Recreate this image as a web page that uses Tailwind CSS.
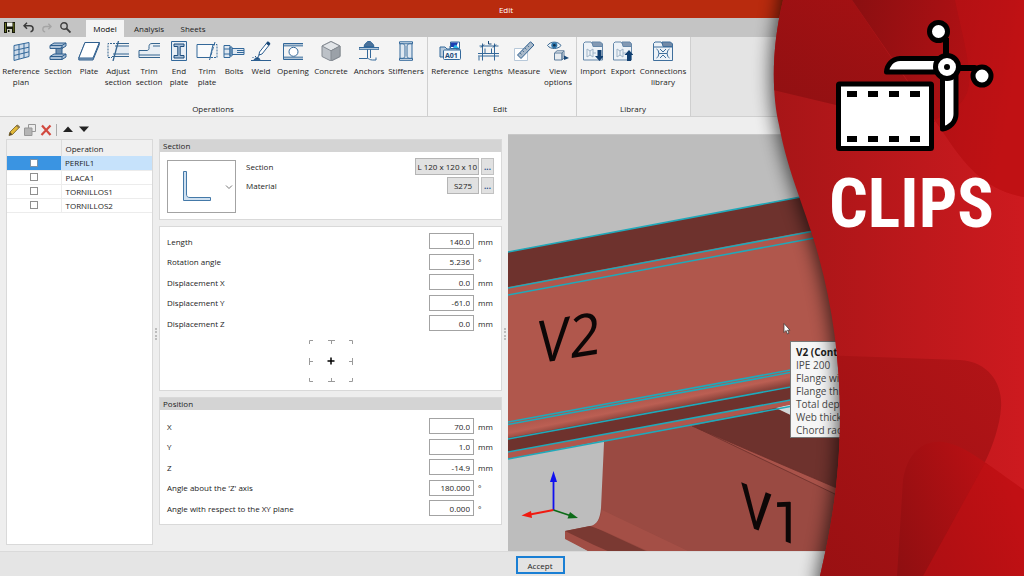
<!DOCTYPE html>
<html lang="en">
  <head>
    <meta charset="UTF-8" />
    <meta name="viewport" content="width=device-width, initial-scale=1.0" />
    <title>Edit</title>
    <script src="https://cdn.jsdelivr.net/npm/@tailwindcss/browser@4"></script>
  </head>
  <body>
    <div
      class="relative flex min-h-screen flex-col overflow-hidden bg-[#eeeeee] font-['Open_Sans','Noto_Sans',sans-serif] text-[8px] leading-[11px] text-[#1c1c1c]"
    >
      <!-- Title bar -->
      <header class="flex h-[18px] items-center justify-center bg-[#b92b0e] pr-3">
        <h1 class="text-white">Edit</h1>
      </header>

      <!-- Quick access + tabs -->
      <nav class="flex h-[19px] items-end bg-[#c4c4c4]">
        <div class="flex h-full w-[86px] items-center gap-2 pl-1">
          <button aria-label="Save">
            <svg class="size-[11px]" viewBox="0 0 11 11">
              <path d="M0 0h11v11H0z" fill="#15170c" />
              <path d="M3 0.500h5.500v4H3z" fill="#eef0e8" />
              <path d="M3 7h5v4H3z" fill="#c9cabb" />
              <path d="M1 1h1v9H1zM9.300 1h1v9h-1z" fill="#6c7420" />
              <path d="M4 8h1.500v2H4z" fill="#15170c" />
            </svg>
          </button>
          <button aria-label="Undo">
            <svg class="size-[11px]" viewBox="0 0 11 11" fill="none" stroke="#3b3b3b" stroke-width="1.500">
              <path d="M4 0.800 1 3.800l3 3M1.200 3.800H7c4 0 4 5.500 0.500 6" />
            </svg>
          </button>
          <button aria-label="Redo" disabled>
            <svg class="size-[10px]" viewBox="0 0 11 11" fill="none" stroke="#a5a5a5" stroke-width="1.500">
              <path d="M7 0.800l3 3-3 3M9.800 3.800H4c-4 0-4 5.500-0.500 6" />
            </svg>
          </button>
          <button aria-label="Search">
            <svg class="size-[11px]" viewBox="0 0 11 11" fill="none" stroke="#3f3f3f" stroke-width="1.400">
              <circle cx="4" cy="4" r="3.200" />
              <path d="M6.400 6.400 10.500 10.500" stroke-width="1.900" />
            </svg>
          </button>
        </div>
        <button class="h-[17px] w-[38px] bg-[#f4f4f4] text-black">Model</button>
        <button class="h-[17px] w-[50px]">Analysis</button>
        <button class="h-[17px] w-[38px]">Sheets</button>
      </nav>

      <!-- Ribbon -->
      <div class="flex h-20 border-b border-[#d0d0d0] bg-[#e4e4e4]">
        <section class="flex flex-col justify-between border-r border-[#cfcfcf] bg-[#f4f4f4] pt-1 pr-0.5 pl-px">
          <div class="flex items-start">
            <button class="flex w-10 flex-col items-center gap-1">
              <svg class="size-5" viewBox="0 0 20 20" fill="#cfdcea" stroke="#33689a">
                <path d="M3 4.500 18 1.500V15.500L3 19.500z" />
                <path d="M8 3.500V18M13 2.500V17M3 9.500 18 6.200M3 14.500 18 10.800" fill="none" />
              </svg>
              <span>Reference<br />plan</span>
            </button>
            <button class="flex w-[34px] flex-col items-center gap-1">
              <svg class="size-5" viewBox="0 0 20 20" fill="#a9bfd6" stroke="#2f5f8e">
                <path d="M2 4.500 6 2h12v3l-4 2.500H2z" />
                <path d="M8 7.500h4l2-1v7l-2 1H8z" fill="#6f8fb0" />
                <path d="M2 15.500 6 13h12v3l-4 2.500H2z" />
                <path d="M2 4.500h12M14 7.500v-3l4-2.500M2 15.500h12v3M14 15.500l4-2.500" fill="none" />
              </svg>
              <span>Section</span>
            </button>
            <button class="flex w-7 flex-col items-center gap-1">
              <svg class="h-5 w-[22px]" viewBox="0 0 22 20" stroke="#2f5f8e">
                <path d="M7 1.500h14.300v2L15 19H0.800v-2z" fill="#8fa9c4" />
                <path d="M7 1.500h14.300L15 17H0.800z" fill="#fff" />
              </svg>
              <span>Plate</span>
            </button>
            <button class="flex w-[30px] flex-col items-center gap-1">
              <svg class="h-5 w-[22px]" viewBox="0 0 22 20" fill="none" stroke="#35658f">
                <path d="M8 4.500h14v10H8z" fill="#e4ebf2" stroke="none" />
                <path d="M9 2.500h13M8 5h14M6 13h16M5 15.500h17" />
                <path d="M8 2.500H1v14h4" stroke-dasharray="2 1" />
                <path d="M11.500 0 6 20" stroke-width="1.300" />
              </svg>
              <span>Adjust<br />section</span>
            </button>
            <button class="flex w-8 flex-col items-center gap-1">
              <svg class="h-5 w-[22px]" viewBox="0 0 22 20" fill="none" stroke="#35658f">
                <path d="M1 9.500h8c1.500 0 2-1 2-2V5c0-1.500 1-2 2-2h9V16.500H1z" fill="#e8eef4" stroke="none" />
                <path d="M22 2.500h-8c-2 0-3 1-3 3v2c0 1-1 2-2 2H1v7h21M1 14h21M22 5h-7" />
              </svg>
              <span>Trim<br />section</span>
            </button>
            <button class="flex w-7 flex-col items-center gap-1">
              <svg class="size-5" viewBox="0 0 20 20" fill="#e7eef5" stroke="#33689a">
                <path d="M2.500 0.500h15v19h-15z" />
                <path d="M5 3h10v2.500h-3.800v9H15V17H5v-2.500h3.800v-9H5z" fill="#a5bdd6" stroke="#1d4d7d" />
              </svg>
              <span>End<br />plate</span>
            </button>
            <button class="flex w-7 flex-col items-center gap-1">
              <svg class="h-5 w-[22px]" viewBox="0 0 22 20" fill="none" stroke="#33689a">
                <path d="M1 3.500h16l-3 13H1z" fill="#f8fafc" />
                <path d="M17 3.500h4v13h-7" stroke-dasharray="2 1" />
                <path d="M19 1 13.500 19" stroke-dasharray="4 1" />
              </svg>
              <span>Trim<br />plate</span>
            </button>
            <button class="flex w-[26px] flex-col items-center gap-1">
              <svg class="h-5 w-[22px]" viewBox="0 0 22 20" fill="#dfe8f1" stroke="#33689a">
                <path d="M1 4.500h6v12H1zM7 6h2v9H7zM9 7.500h12v6H9z" />
                <path d="M1 8h6M1 13h6M14 9.500h7M14 11.500h7" />
              </svg>
              <span>Bolts</span>
            </button>
            <button class="flex w-7 flex-col items-center gap-1">
              <svg class="size-5" viewBox="0 0 20 20" fill="none" stroke="#2d5f90">
                <path d="M16.500 1 19 3 11 13l-3 1 0.500-3z" fill="#fff" />
                <path d="M16 1.500 18.500 3.500" stroke="#174676" stroke-width="3" />
                <path d="M8.500 13 6.500 17" />
                <path d="M0 19.500h20" />
                <path d="M3 19c1-3 5-3 6-0.500z" fill="#174676" />
                <path d="M4.500 15v1M1.500 16.500h1" />
              </svg>
              <span>Weld</span>
            </button>
            <button class="flex w-9 flex-col items-center gap-1">
              <svg class="h-5 w-[22px]" viewBox="0 0 22 20" fill="none" stroke="#33689a">
                <path d="M1.500 2.500H21M1.500 18.500H21M1.500 2.500v16" />
                <path d="M2 4.500h19M2 16.500h19" stroke="#6f94b6" stroke-width="2" />
                <circle cx="11.500" cy="10.800" r="4.500" fill="#fff" />
              </svg>
              <span>Opening</span>
            </button>
            <button class="flex w-10 flex-col items-center gap-1">
              <svg class="size-5" viewBox="0 0 20 20" stroke="#858b92">
                <path d="M10 0.500 19 5v10.500L10 20l-9-4.500V5z" fill="#bcc1c7" />
                <path d="M10 0.500 19 5l-9 4.800L1 5z" fill="#e2e5e8" />
                <path d="M10 9.800 19 5v10.500L10 20z" fill="#9ba1a8" />
              </svg>
              <span>Concrete</span>
            </button>
            <button class="flex w-9 flex-col items-center gap-1">
              <svg class="size-5" viewBox="0 0 20 20" fill="none" stroke="#33689a">
                <path d="M5 5.500C5.500 2 8 2 8.500 0.500h3C12 2 14.500 2 15 5.500z" fill="#4a7199" />
                <path d="M0 6.500h20v1.800H0z" fill="#d4e0eb" />
                <path d="M8.500 8.300v8.700M11.500 8.300v8.700M0 17.500h8.500c1.500 0 2 1.500 5 1.500h3.500v-2.500" />
              </svg>
              <span>Anchors</span>
            </button>
            <button class="flex w-[38px] flex-col items-center gap-1">
              <svg class="size-5" viewBox="0 0 20 20" fill="#dfe8f1" stroke="#33689a">
                <path d="M3.500 0.800h13v2h-13zM3.500 17.300h13v2h-13z" />
                <path d="M4 2.800h3.500l1.500 2v10.500l-1.500 2H4zM16 2.800h-3.500l-1.500 2v10.500l1.500 2H16z" />
              </svg>
              <span>Stiffeners</span>
            </button>
          </div>
          <h2 class="pb-0.5 text-center">Operations</h2>
        </section>

        <section class="flex flex-col justify-between border-r border-[#cfcfcf] bg-[#f4f4f4] pt-1 pr-1">
          <div class="flex items-start">
            <button class="flex w-11 flex-col items-center gap-1">
              <svg class="h-5 w-[22px]" viewBox="0 0 22 20" stroke="#33689a">
                <path d="M1 6h5l2 2h3V5h6v3h4v8H1z" fill="#b9cbdc" />
                <path d="M11.500 1h9v6.500h-9z" fill="#fff" />
                <path d="M12 1.500h7l-2 4.500h-5z" fill="#1d3fb0" stroke="none" />
                <path d="M16 3.500 20 7h-6z" fill="#27b7e6" stroke="none" />
                <rect x="4.500" y="9" width="17" height="9.500" rx="1" fill="#f4f8fb" />
                <text x="6" y="16.500" font-size="7" font-weight="700" fill="#1d4a7a" stroke="none">A01</text>
              </svg>
              <span>Reference</span>
            </button>
            <button class="flex w-8 flex-col items-center gap-1">
              <svg class="h-5 w-[22px]" viewBox="0 0 22 20" fill="none" stroke="#33689a">
                <path d="M2.500 5h19M5.500 2.500v17M17.500 2.500v17M1 12.500h21M1 15h21M8 7.500v5M14.500 7.500v5M2 19.500v-4" />
                <path d="M11.500 0v3h3M4 6.500 7 3.500M16 6.500l3-3" stroke="#174676" />
              </svg>
              <span>Lengths</span>
            </button>
            <button class="flex w-10 flex-col items-center gap-1">
              <svg class="size-5" viewBox="0 0 20 20" fill="none">
                <path d="M0.500 7.500h13v12h-13z" stroke="#b7c8d9" fill="#fff" />
                <path d="M16.500 0.800 20 4 7 17.500 3.500 14z" fill="#a9b9c9" stroke="#2f5f8e" />
                <path d="M6 12l1.500 1.500M8.500 9.500l1.500 1.500M11 7l1.500 1.500M13.500 4.500l1.500 1.500" stroke="#4d7396" />
              </svg>
              <span>Measure</span>
            </button>
            <button class="flex w-7 flex-col items-center gap-1">
              <svg class="h-5 w-[22px]" viewBox="0 0 22 20">
                <path d="M0.500 4.500C3.500 0 11 0 14 4.500 11 8.500 3.500 8.500 0.500 4.500z" fill="#eaf2f8" stroke="#37658f" />
                <circle cx="7.300" cy="4.300" r="3" fill="#2f77ac" />
                <circle cx="7.300" cy="4.300" r="1.300" fill="#10304f" />
                <path d="M7.500 12 10 9.800h7l-2 2.200v7H7.500zM15 19l2-2.200v-7" fill="#e8ecf0" stroke="#5d7d9c" />
                <path d="M7.500 12H15v7" fill="none" stroke="#5d7d9c" />
                <path d="M17 14.500 22 17l-5 2z" fill="#174676" />
              </svg>
              <span>View<br />options</span>
            </button>
          </div>
          <h2 class="pb-0.5 text-center">Edit</h2>
        </section>

        <section class="flex flex-col justify-between border-r border-[#cfcfcf] bg-[#f4f4f4] pt-1 pr-px">
          <div class="flex items-start">
            <button class="flex w-8 flex-col items-center gap-1">
              <svg class="size-5" viewBox="0 0 20 20" fill="none" stroke="#6487a9">
                <path d="M0.500 2.500 2 1h6l1.500 2h10v16h-19z" fill="#edf2f7" />
                <path d="M9 1h8.500L19.500 3v2.500H10z" fill="#8399b3" />
                <path d="M4 8l3 2 3-2M4 16l3-2 3 2M7 10v4M4 8v8M10 8v8M10 12h3" stroke="#9fb4c8" />
                <path d="M14.500 9h4v6H21l-4.500 5-4.500-5h2.500z" fill="#123f70" stroke="none" />
              </svg>
              <span>Import</span>
            </button>
            <button class="flex w-7 flex-col items-center gap-1">
              <svg class="size-5" viewBox="0 0 20 20" fill="none" stroke="#6487a9">
                <path d="M0.500 2.500 2 1h6l1.500 2h9v16h-18z" fill="#edf2f7" />
                <path d="M9 1h8L18.500 3v2.500H10z" fill="#8399b3" />
                <path d="M4 8l3 2 3-2M4 16l3-2 3 2M7 10v4M4 8v8M10 8v8M10 12h3" stroke="#9fb4c8" />
                <path d="M14 20h4v-6h2.500L16 9l-4.500 5H14z" fill="#123f70" stroke="none" />
              </svg>
              <span>Export</span>
            </button>
            <button class="flex w-[52px] flex-col items-center gap-1">
              <svg class="size-5" viewBox="0 0 20 20" fill="none" stroke="#3f6f9c">
                <path d="M0.500 2.500 2 1h6l1.500 2h10v16.500h-19z" fill="#edf2f7" />
                <path d="M9 1h8.500L19.500 3v2.500H10z" fill="#7189a6" />
                <path d="M1 6h18" />
                <path d="M3.500 8c3 1 3 8 0 9M16.500 8c-3 1-3 8 0 9M6 12.500h8M7 8l3 3 3-3M7 17l3-3 3 3" />
              </svg>
              <span>Connections<br />library</span>
            </button>
          </div>
          <h2 class="pb-0.5 text-center">Library</h2>
        </section>
      </div>

      <!-- Workspace -->
      <main class="flex grow">
        <!-- Operations list -->
        <div class="flex w-[153px] shrink-0 flex-col pb-1.5 pl-1.5">
          <div class="flex h-[22px] items-center gap-1 pt-1 pl-0.5">
            <button aria-label="Edit operation">
              <svg class="size-3" viewBox="0 0 12 12">
                <path d="M1 11.500 2 8 9 1l2.500 2.200L4.500 10.500z" fill="#e3b93a" stroke="#6e5a22" stroke-width="0.800" />
                <path d="M1 11.500 2 8l2.500 2.500z" fill="#5a4a2c" />
                <path d="M8 2 9.500 0.500 12 2.800 10.500 4.300z" fill="#8c7a52" />
              </svg>
            </button>
            <button aria-label="Copy operation">
              <svg class="size-3" viewBox="0 0 12 12" stroke="#979797">
                <path d="M4.500 0.500h7v7h-7z" fill="#ececec" />
                <path d="M0.500 4h7.500v7.500H0.500z" fill="#b5b5b5" />
              </svg>
            </button>
            <button aria-label="Delete operation">
              <svg class="size-3" viewBox="0 0 12 12" stroke="#d2493f" stroke-width="2.200">
                <path d="M2 1.500 10.500 11M10.500 1.500 1.500 11" />
              </svg>
            </button>
            <span class="h-3 w-px bg-[#ababab]"></span>
            <button class="ml-0.5" aria-label="Move up">
              <svg class="h-3 w-2.5" viewBox="0 0 10 12"><path d="M0 8 5 2.500l5 5.500z" fill="#222" /></svg>
            </button>
            <button class="ml-0.5" aria-label="Move down">
              <svg class="h-3 w-2.5" viewBox="0 0 10 12"><path d="M0 2.500 5 8l5-5.500z" fill="#222" /></svg>
            </button>
          </div>
          <div class="grow border border-[#d9d9d9] bg-white">
            <table class="w-full table-fixed border-collapse">
              <thead>
                <tr class="h-4 bg-[#f0f0f0] text-left">
                  <th class="w-[54px] border-r border-[#dcdcdc] font-normal" aria-label="Selected"></th>
                  <th class="p-0 pl-1 font-normal">Operation</th>
                </tr>
              </thead>
              <tbody>
                <tr class="h-3.5 border-b border-[#ececec]">
                  <td class="bg-[#3a94e2] p-0">
                    <input id="op1" type="checkbox" class="mx-auto block size-2 appearance-none border border-[#7c93a8] bg-white" />
                  </td>
                  <td class="bg-[#c6e2fb] p-0 pl-1"><label for="op1">PERFIL1</label></td>
                </tr>
                <tr class="h-3.5 border-b border-[#ececec]">
                  <td class="border-r border-[#ececec] p-0">
                    <input id="op2" type="checkbox" class="mx-auto block size-2 appearance-none border border-[#909090] bg-white" />
                  </td>
                  <td class="p-0 pl-1"><label for="op2">PLACA1</label></td>
                </tr>
                <tr class="h-3.5 border-b border-[#ececec]">
                  <td class="border-r border-[#ececec] p-0">
                    <input id="op3" type="checkbox" class="mx-auto block size-2 appearance-none border border-[#909090] bg-white" />
                  </td>
                  <td class="p-0 pl-1"><label for="op3">TORNILLOS1</label></td>
                </tr>
                <tr class="h-3.5 border-b border-[#ececec]">
                  <td class="border-r border-[#ececec] p-0">
                    <input id="op4" type="checkbox" class="mx-auto block size-2 appearance-none border border-[#909090] bg-white" />
                  </td>
                  <td class="p-0 pl-1"><label for="op4">TORNILLOS2</label></td>
                </tr>
              </tbody>
            </table>
          </div>
        </div>

        <div class="flex w-1.5 shrink-0 items-center justify-center">
          <span class="h-3 border-l-2 border-dotted border-[#bdbdbd]"></span>
        </div>

        <!-- Properties -->
        <form class="flex w-[343px] shrink-0 flex-col gap-1.5 pt-[22px]">
          <section class="border border-[#d9d9d9] bg-white">
            <h2 class="h-3 bg-[#d4d4d4] pl-[3px]">Section</h2>
            <div class="flex items-start justify-between gap-2.5 px-[7px] pt-1.5 pb-1.5">
              <button type="button" aria-label="Section type" class="mt-0.5 flex h-[53px] w-[69px] items-center justify-end border border-[#a3a3a3] bg-white pr-0.5">
                <svg class="h-9 w-7" viewBox="0 0 28 36" fill="#cfe0f0" stroke="#4479a8">
                  <path d="M0.500 2.500h3V25c0 2.500 1 3.500 3.500 3.500h20.500v3H0.500z" />
                </svg>
                <svg class="ml-3.5 size-2" viewBox="0 0 8 8" fill="none" stroke="#777"><path d="M1 2.500 4 5.500l3-3" /></svg>
              </button>
              <div class="flex grow flex-col gap-0.5">
                <div class="flex h-[17px] items-center gap-0.5">
                  <span class="grow">Section</span>
                  <button type="button" class="h-[17px] border border-[#b5b5b5] bg-[#e1e1e1] px-px">L 120 x 120 x 10</button>
                  <button type="button" aria-label="Choose section" class="h-[17px] w-[13px] border border-[#c2c2c2] bg-[#e1e1e1] font-bold text-[#28508c]">...</button>
                </div>
                <div class="flex h-[17px] items-center gap-0.5">
                  <span class="grow">Material</span>
                  <button type="button" class="h-[17px] w-8 border border-[#b5b5b5] bg-[#e1e1e1]">S275</button>
                  <button type="button" aria-label="Choose material" class="h-[17px] w-[13px] border border-[#c2c2c2] bg-[#e1e1e1] font-bold text-[#28508c]">...</button>
                </div>
              </div>
            </div>
          </section>

          <section class="border border-[#d9d9d9] bg-white px-[7px] pt-1.5 pb-px">
            <div class="flex h-[98px] flex-col justify-between">
              <div class="flex h-4 items-center gap-1">
                <label for="length" class="grow">Length</label>
                <input id="length" type="text" value="140.0" class="h-4 w-[45px] border border-[#a3a3a3] bg-white pr-[3px] text-right" />
                <span class="w-4">mm</span>
              </div>
              <div class="flex h-4 items-center gap-1">
                <label for="rotation" class="grow">Rotation angle</label>
                <input id="rotation" type="text" value="5.236" class="h-4 w-[45px] border border-[#a3a3a3] bg-white pr-[3px] text-right" />
                <span class="w-4">°</span>
              </div>
              <div class="flex h-4 items-center gap-1">
                <label for="dx" class="grow">Displacement X</label>
                <input id="dx" type="text" value="0.0" class="h-4 w-[45px] border border-[#a3a3a3] bg-white pr-[3px] text-right" />
                <span class="w-4">mm</span>
              </div>
              <div class="flex h-4 items-center gap-1">
                <label for="dy" class="grow">Displacement Y</label>
                <input id="dy" type="text" value="-61.0" class="h-4 w-[45px] border border-[#a3a3a3] bg-white pr-[3px] text-right" />
                <span class="w-4">mm</span>
              </div>
              <div class="flex h-4 items-center gap-1">
                <label for="dz" class="grow">Displacement Z</label>
                <input id="dz" type="text" value="0.0" class="h-4 w-[45px] border border-[#a3a3a3] bg-white pr-[3px] text-right" />
                <span class="w-4">mm</span>
              </div>
            </div>
            <!-- Insertion point picker -->
            <div class="mx-auto mt-px grid w-[60px] grid-cols-3">
              <button type="button" aria-label="Top left" class="h-[19px]">
                <svg class="mx-auto size-2" viewBox="0 0 8 8" fill="none" stroke="#9a9a9a"><path d="M2.500 6V2.500H6" /></svg>
              </button>
              <button type="button" aria-label="Top" class="h-[19px]">
                <svg class="mx-auto size-2" viewBox="0 0 8 8" fill="none" stroke="#9a9a9a"><path d="M1 2.500h7M4.500 2.500V6" /></svg>
              </button>
              <button type="button" aria-label="Top right" class="h-[19px]">
                <svg class="mx-auto size-2" viewBox="0 0 8 8" fill="none" stroke="#9a9a9a"><path d="M2 2.500h3.500V6" /></svg>
              </button>
              <button type="button" aria-label="Left" class="h-[19px]">
                <svg class="mx-auto size-2" viewBox="0 0 8 8" fill="none" stroke="#9a9a9a"><path d="M2.500 1v7M2.500 4.500H6" /></svg>
              </button>
              <button type="button" aria-label="Center" class="h-[19px]">
                <svg class="mx-auto size-2" viewBox="0 0 8 8" fill="none" stroke="#000" stroke-width="1.500"><path d="M4 0.500v7M0.500 4h7" /></svg>
              </button>
              <button type="button" aria-label="Right" class="h-[19px]">
                <svg class="mx-auto size-2" viewBox="0 0 8 8" fill="none" stroke="#9a9a9a"><path d="M5.500 1v7M2 4.500h3.500" /></svg>
              </button>
              <button type="button" aria-label="Bottom left" class="h-[19px]">
                <svg class="mx-auto size-2" viewBox="0 0 8 8" fill="none" stroke="#9a9a9a"><path d="M2.500 2v3.500H6" /></svg>
              </button>
              <button type="button" aria-label="Bottom" class="h-[19px]">
                <svg class="mx-auto size-2" viewBox="0 0 8 8" fill="none" stroke="#9a9a9a"><path d="M1 5.500h7M4.500 2v3.500" /></svg>
              </button>
              <button type="button" aria-label="Bottom right" class="h-[19px]">
                <svg class="mx-auto size-2" viewBox="0 0 8 8" fill="none" stroke="#9a9a9a"><path d="M2 5.500h3.500V2" /></svg>
              </button>
            </div>
          </section>

          <section class="border border-[#d9d9d9] bg-white">
            <h2 class="h-3 bg-[#d4d4d4] pl-[3px]">Position</h2>
            <div class="px-[7px] py-2">
              <div class="flex h-[98px] flex-col justify-between">
                <div class="flex h-4 items-center gap-1">
                  <label for="px" class="grow">X</label>
                  <input id="px" type="text" value="70.0" class="h-4 w-[45px] border border-[#a3a3a3] bg-white pr-[3px] text-right" />
                  <span class="w-4">mm</span>
                </div>
                <div class="flex h-4 items-center gap-1">
                  <label for="py" class="grow">Y</label>
                  <input id="py" type="text" value="1.0" class="h-4 w-[45px] border border-[#a3a3a3] bg-white pr-[3px] text-right" />
                  <span class="w-4">mm</span>
                </div>
                <div class="flex h-4 items-center gap-1">
                  <label for="pz" class="grow">Z</label>
                  <input id="pz" type="text" value="-14.9" class="h-4 w-[45px] border border-[#a3a3a3] bg-white pr-[3px] text-right" />
                  <span class="w-4">mm</span>
                </div>
                <div class="flex h-4 items-center gap-1">
                  <label for="az" class="grow">Angle about the 'Z' axis</label>
                  <input id="az" type="text" value="180.000" class="h-4 w-[45px] border border-[#a3a3a3] bg-white pr-[3px] text-right" />
                  <span class="w-4">°</span>
                </div>
                <div class="flex h-4 items-center gap-1">
                  <label for="axy" class="grow">Angle with respect to the XY plane</label>
                  <input id="axy" type="text" value="0.000" class="h-4 w-[45px] border border-[#a3a3a3] bg-white pr-[3px] text-right" />
                  <span class="w-4">°</span>
                </div>
              </div>
            </div>
          </section>
        </form>

        <div class="flex w-1.5 shrink-0 items-center justify-center">
          <span class="h-3 border-l-2 border-dotted border-[#bdbdbd]"></span>
        </div>

        <!-- 3D view -->
        <div class="flex min-w-0 grow pt-[17px]">
          <div class="relative grow overflow-hidden border-t border-[#c8c8c8] bg-[#bdbdbd]">
            <svg class="absolute inset-0 size-full" viewBox="508 135 516 416" preserveAspectRatio="xMinYMin slice">
              <defs>
                <linearGradient id="fillet" gradientUnits="userSpaceOnUse" x1="640" y1="399" x2="643" y2="414">
                  <stop offset="0" stop-color="#b0574c" />
                  <stop offset="0.500" stop-color="#bb5f53" />
                  <stop offset="1" stop-color="#8a433b" />
                </linearGradient>
              </defs>
              <!-- beam V1 -->
              <path d="M604 440V443L601 508C600 519 597 525 590 526L565 531V538L590 552H1024V380L720 400z" fill="#9a4a42" />
              <path d="M565 531 590 526 604 531 650 552H592z" fill="#7a3932" />
              <path d="M565 531 594 545 610 552H590L565 539z" fill="#a04d44" />
              <path d="M592 526C600 522 601 516 602 510L690 552H648z" fill="#ab5449" opacity="0.600" />
              <path d="M692 426 776 408 860 448V499z" fill="#6e322d" />
              <path d="M776 408 790 404 1024 360V525L845 441z" fill="#d4d8d8" />
              <path d="M692 426 860 498V506L697 428z" fill="#a9534a" />
              <path d="M692 426 860 498M697 428 860 506" fill="none" stroke="#6b302b" stroke-width="0.800" />
              <!-- beam V2 -->
              <path d="M508 252 1024 155V360L508 459z" fill="#b0574c" />
              <path d="M508 252 1024 155V191L508 287z" fill="#6e322d" />
              <path d="M508 423 1024 328V343L508 438z" fill="url(#fillet)" />
              <path d="M508 438 1024 343V357L508 452z" fill="#6e322d" />
              <g stroke="#20a9ba" stroke-width="1.500">
                <path d="M508 252 1024 155M508 288 1024 192M508 295 1024 199" />
                <path d="M508 439 1024 344M508 452 1024 357M508 459 1024 363" />
                <path d="M508 422 1024 327M508 424.500 1024 329.500" />
              </g>
              <text x="540" y="363" transform="rotate(-9 540 363)" font-size="58" font-style="italic" fill="#0d0707">V2</text>
              <text
                transform="translate(740 523) skewY(22)"
                class="font-['Roboto_Condensed','Liberation_Sans_Narrow',sans-serif]"
                font-size="58"
                fill="#0d0707"
              >V1</text>
              <!-- axes -->
              <path d="M553.500 510V479" stroke="#1010f0" stroke-width="1.800" />
              <path d="M553.500 471 557 482h-7z" fill="#1010f0" />
              <path d="M553.500 510 530 514.500" stroke="#f01a10" stroke-width="1.800" />
              <path d="M521.500 515.500 531 511l1 7z" fill="#f01a10" />
              <path d="M553.500 510 570 515.500" stroke="#0c6b18" stroke-width="1.800" />
              <path d="M578 518 570 512l-2.500 6.500z" fill="#0c6b18" />
              <!-- pointer -->
              <path d="M784 323.500v9l2-2 1.500 3.500 1.500-0.800-1.500-3h2.500z" fill="#fff" stroke="#333" stroke-width="0.700" />
            </svg>
            <div
              role="tooltip"
              class="absolute top-[206px] left-[282px] w-32 border border-[#777] bg-[#f6f6f6] px-[5px] pt-1 text-[10px] leading-[13px] whitespace-nowrap text-[#484848]"
            >
              <p class="font-bold text-[#1c1c1c]">V2 (Continuous)</p>
              <p>IPE 200</p>
              <p>Flange width</p>
              <p>Flange thickness</p>
              <p>Total depth</p>
              <p>Web thickness</p>
              <p>Chord radius</p>
            </div>
          </div>
        </div>
      </main>

      <footer class="flex h-[25px] items-center justify-center border-t border-[#dadada] bg-[#e5e5e5] pt-0.5 pl-14">
        <button class="h-[18px] w-[49px] border-2 border-[#1a7fd4] bg-[#e3e3e3]">Accept</button>
      </footer>

      <!-- Clips banner -->
      <aside class="absolute inset-y-0 right-0 w-[274px]">
        <svg class="absolute inset-0 size-full" viewBox="750 0 274 576" preserveAspectRatio="xMaxYMin slice">
          <defs>
            <linearGradient id="base" x1="0" y1="0" x2="1" y2="0">
              <stop offset="0" stop-color="#a51517" />
              <stop offset="1" stop-color="#cd1a1f" />
            </linearGradient>
            <linearGradient id="wedge" x1="0" y1="1" x2="1" y2="0">
              <stop offset="0" stop-color="#8e1012" />
              <stop offset="1" stop-color="#a81113" />
            </linearGradient>
            <linearGradient id="fan" x1="0" y1="0" x2="1" y2="0.200">
              <stop offset="0" stop-color="#8a0f11" />
              <stop offset="1" stop-color="#c01115" />
            </linearGradient>
            <linearGradient id="low" x1="0" y1="1" x2="1" y2="0">
              <stop offset="0" stop-color="#981012" />
              <stop offset="1" stop-color="#b21417" />
            </linearGradient>
            <linearGradient id="leaf" x1="0" y1="1" x2="1" y2="0.600">
              <stop offset="0" stop-color="#8e0f11" />
              <stop offset="1" stop-color="#be1014" />
            </linearGradient>
            <clipPath id="shape">
              <path d="M783 0C771 50 772 95 779 125C788 175 808 215 819 258C832 305 840 360 840 415C840 475 832 525 820 576H1024V0z" />
            </clipPath>
            <filter id="soft" x="-30%" y="-10%" width="160%" height="120%">
              <feGaussianBlur stdDeviation="9" />
            </filter>
          </defs>
          <path d="M783 -30V0C771 50 772 95 779 125C788 175 808 215 819 258C832 305 840 360 840 415C840 475 832 525 820 576V610H1060V-30z" transform="translate(-3 0)" filter="url(#soft)" opacity="0.650" />
          <g clip-path="url(#shape)">
            <path d="M760 0h264v576H760z" fill="url(#base)" />
            <path d="M760 0H852L935 122 836 105 760 87z" fill="url(#wedge)" />
            <path d="M852 0H1024V197C985 190 965 165 945 135z" fill="url(#fan)" />
            <path d="M955 0C962 35 973 70 968 90C962 108 948 112 935 120L945 135C965 165 985 190 1024 197V0z" fill="#c01115" opacity="0.450" />
            <path d="M820 355 960 360C990 362 1003 385 1001 408C1000 425 992 448 985 462L923 576H800V355z" fill="url(#low)" />
            <path d="M897 576 903 480C908 450 925 440 943 442C965 445 985 463 1024 490V576z" fill="url(#leaf)" />
            <path d="M985 463 923 576H1024V490C1010 480 997 470 985 463z" fill="#c31014" opacity="0.500" />
          </g>
          <!-- film strip -->
          <rect x="838.500" y="84" width="93" height="64.500" rx="1" fill="#fff" stroke="#000" stroke-width="5" stroke-linejoin="round" />
          <path d="M847 91h10v6h-10zM868 91h10v6h-10zM889 91h10v6h-10zM910 91h10v6h-10zM847 136h10v6h-10zM868 136h10v6h-10zM889 136h10v6h-10zM910 136h10v6h-10z" />
          <!-- scissors -->
          <g fill="#fff" stroke="#000" stroke-width="5" stroke-linejoin="round">
            <path d="M938 58.500H900C892 59 887 65 886.500 72H938z" />
            <path d="M942.500 76V129C950 127.500 956 122 956 114V76z" />
            <path d="M946 38V56M958 68H975L980 71" stroke-width="6" fill="none" />
            <circle cx="938.500" cy="31.500" r="9" />
            <circle cx="982" cy="76" r="9" />
            <circle cx="947" cy="67" r="11.500" />
            <circle cx="947" cy="67" r="3" fill="#000" stroke="none" />
          </g>
        </svg>
        <p
          class="relative pt-[171px] pl-[79px] font-['Roboto_Condensed','Liberation_Sans_Narrow',Roboto,sans-serif] text-[68px] leading-[66px] font-bold text-white"
        >
          CLIPS
        </p>
      </aside>
    </div>
  </body>
</html>
